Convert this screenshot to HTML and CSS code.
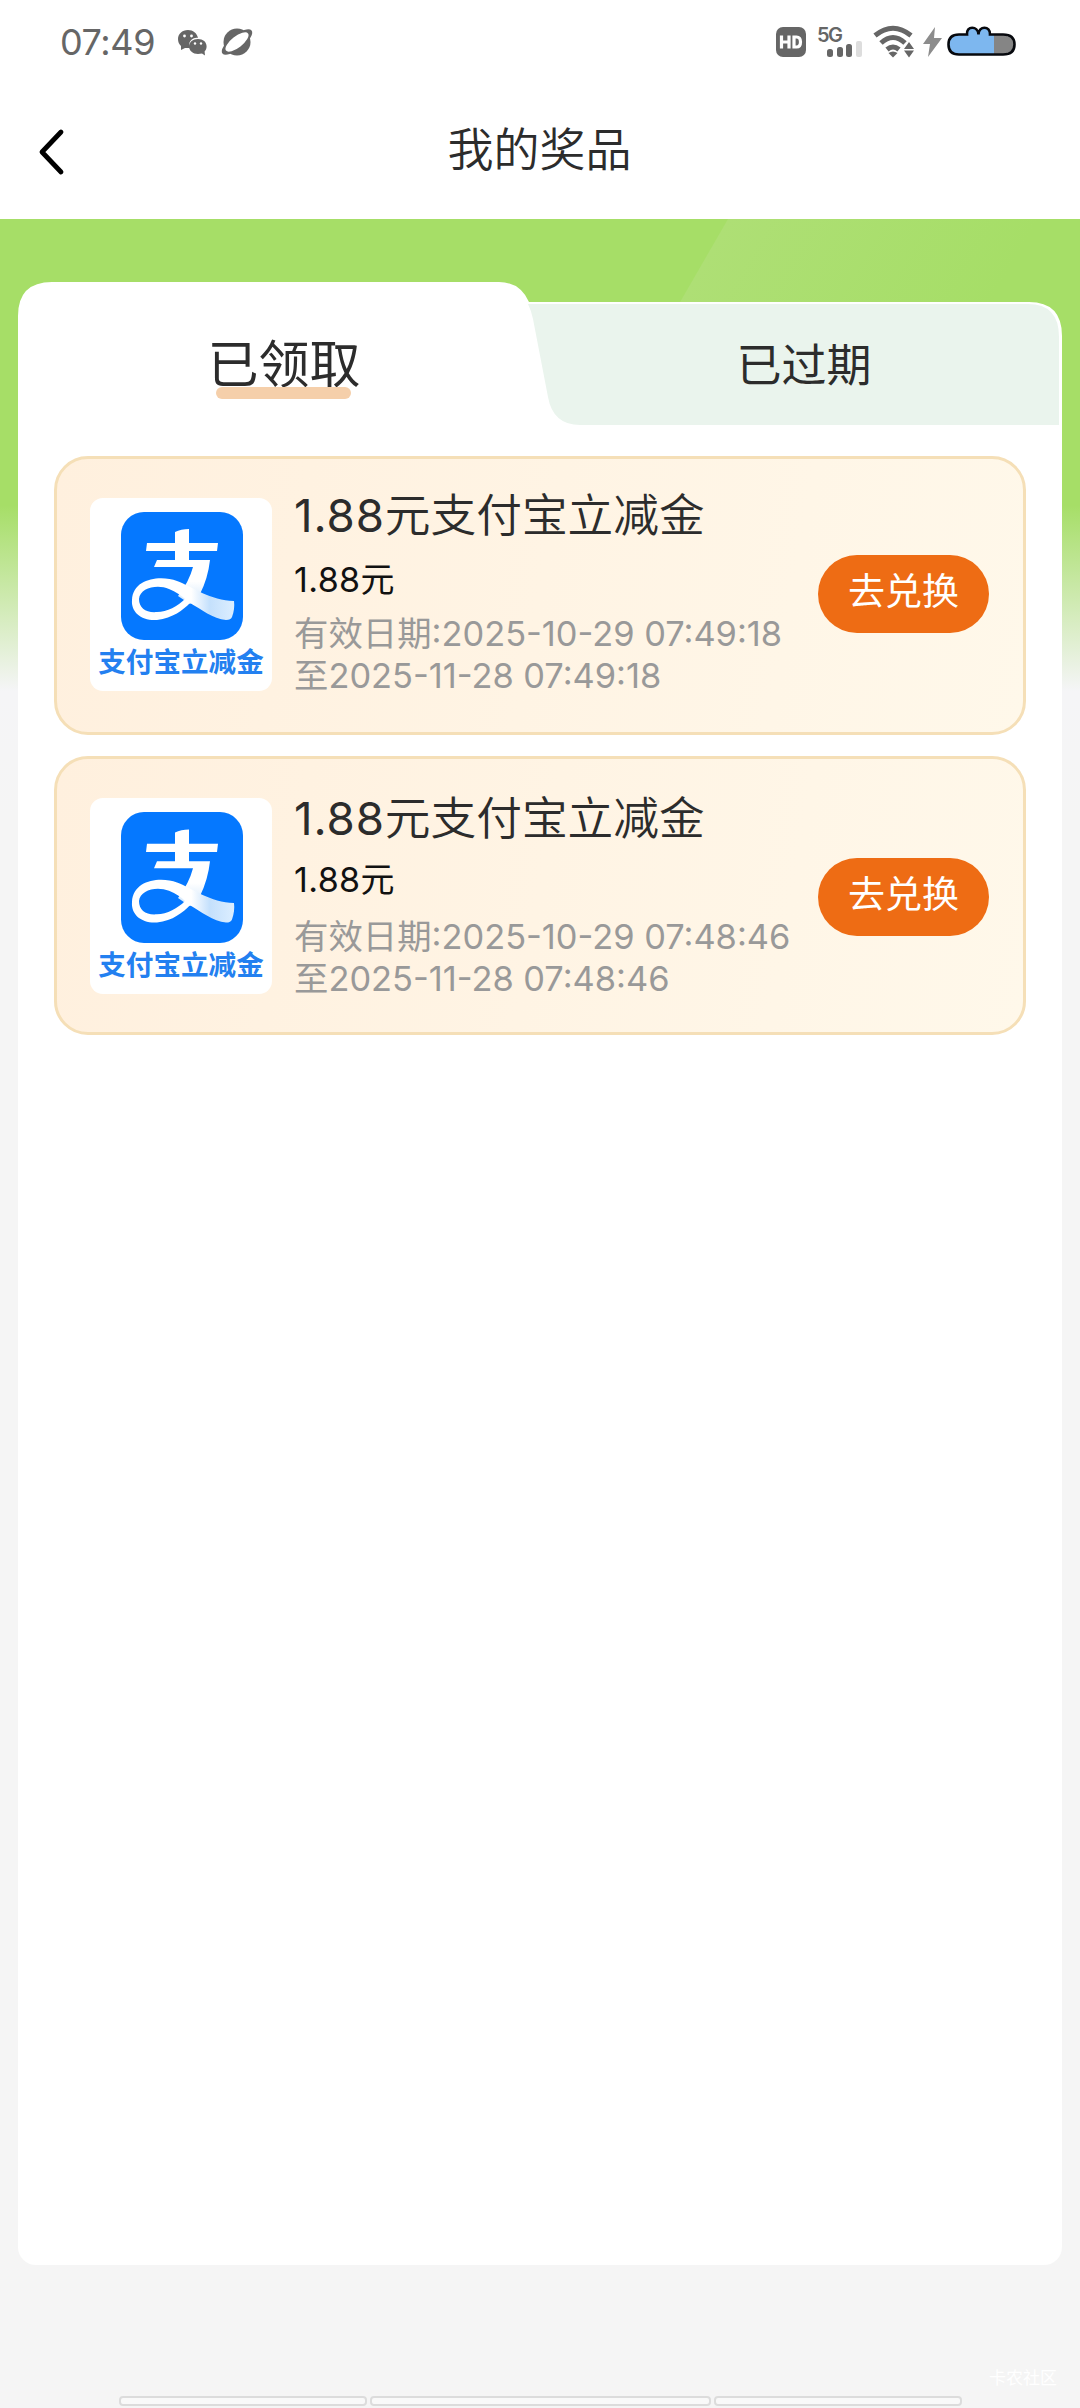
FILE: index.html
```html
<!DOCTYPE html>
<html lang="zh-CN">
<head>
<meta charset="utf-8">
<title>我的奖品</title>
<link rel="stylesheet" href="styles.css">
</head>
<body>
<svg class="defs" width="0" height="0" aria-hidden="true">
  <defs>
    <linearGradient id="loop" x1="0" y1="0" x2="1" y2="0">
      <stop offset="0" stop-color="#fff"/><stop offset=".58" stop-color="#fff"/><stop offset=".76" stop-color="#c4e0fc"/><stop offset="1" stop-color="#dceeff"/>
    </linearGradient>
    <linearGradient id="stem" x1="0" y1="0" x2="0" y2="1">
      <stop offset="0" stop-color="#fff"/><stop offset=".7" stop-color="#fff"/><stop offset="1" stop-color="#cfe5fb"/>
    </linearGradient>
    <symbol id="alipay" viewBox="0 0 122 128" preserveAspectRatio="none">
      <rect width="122" height="128" rx="23" ry="23" fill="#0578ff"/>
      <path d="M54 20Q60 17 68 17V31H97L96 39H68V48H89Q87 66 79 82L69 92 57 84Q68 70 72 55H33L36 48H54V39H25L26 31H54Z" fill="url(#stem)"/>
      <path fill-rule="evenodd" d="M113 89C90 89 70 74 56 69 40 63 12 66 11 88 10 100 20 109 36 108 52 106 62 98 69 91 80 97 92 107 105 108Q110 108 111 105 114 97 113 89ZM18 87C19 76 36 72 48 77 55 80 60 83 64 87 57 94 46 100 36 100 25 101 18 96 18 87Z" fill="url(#loop)"/>
    </symbol>
  </defs>
</svg>
<div class="phone">
  <header class="status">
    <span class="clock">07:49</span>
    <svg class="wechat" width="30" height="28" viewBox="0 0 30 28" fill="#666">
      <path d="M10 0C4 0 0 4 0 9c0 3 1 5 3 7v4l4-2h5c-3-6 3-11 8-10C19 3 15 0 10 0z"/>
      <path d="M20 9c-5 0-9 3-9 7.500 0 4 4 7.500 9 7.500l4-.6 3 2-.4-4c1-1 2-3 2-5C28.600 12 25 9 20 9z"/>
      <circle cx="6.500" cy="6" r="1.400" fill="#fff"/><circle cx="13.500" cy="6" r="1.400" fill="#fff"/>
      <circle cx="17" cy="13.500" r="1.200" fill="#fff"/><circle cx="23" cy="13.500" r="1.200" fill="#fff"/>
    </svg>
    <svg class="planet" width="32" height="28" viewBox="0 0 32 28">
      <circle cx="15" cy="14" r="13.500" fill="#666"/>
      <ellipse cx="15" cy="14" rx="18.500" ry="7" transform="rotate(-38 15 14)" fill="#666"/>
      <ellipse cx="15" cy="14" rx="14" ry="5.600" transform="rotate(-38 15 14)" fill="#fff"/>
    </svg>
    <svg class="signals" width="244" height="34" viewBox="0 0 244 34">
      <rect x="2" y="3" width="30" height="30" rx="7" fill="#666"/>
      <g fill="none" stroke="#fff" stroke-width="3.200"><path d="M7.500 11.500v13M15 11.500v13M7.500 18h7.500M20 13h2.500q4 0 4 5t-4 5H20z"/></g>
      <text x="43" y="18" class="net">5G</text>
      <rect x="53" y="25" width="6" height="8" rx="2.500" fill="#666"/><rect x="63" y="23" width="6" height="10" rx="2.500" fill="#666"/><rect x="72" y="20" width="6" height="13" rx="2.500" fill="#666"/><rect x="82" y="17" width="6" height="16" rx="2" fill="#ddd"/>
      <g fill="none" stroke="#666" stroke-width="5"><path d="M101 11.500Q119-3 137 11.500"/><path d="M107 19Q119 8 131 19"/><path d="M113 25.500q6-5 12 0"/></g>
      <path d="M114.500 29q4.500-3 9 0l-4.500 4.500zM130 25l5-7 5 7zM130 26.500l5 7 5-7z" fill="#666"/>
      <path d="M161 3l-12 17h7l-2 13 14-19h-8z" fill="#8c8c8c"/>
      <path d="M185 11h8c0-9 11-8 11-1 0-7 12-8 12 1h13q11 2 11 9.500T229 30h-44q-10-1-10-9.500t10-9.500z" fill="#858585"/>
      <path d="M185 11h8c0-9 11-8 11-1 0-7 12-8 12 1h4v19h-35q-10-1-10-9.500t10-9.500z" fill="#7db7ef"/>
      <path d="M185 10.500h8c-1-9 11-9 11.500 0 0-9 12-9 11.500 0h13q11.500 0 11.500 10T229 30.500h-44q-10.500 0-10.500-10t10.500-10z" fill="none" stroke="#07090e" stroke-width="2.600"/>
    </svg>
  </header>
  <nav class="bar">
    <svg class="back" width="28" height="46" viewBox="0 0 28 46"><path d="M23 3L4 23l19 20" fill="none" stroke="#000" stroke-width="4.800" stroke-linecap="round" stroke-linejoin="round"/></svg>
    <h1>我的奖品</h1>
  </nav>
  <main class="stage">
    <section class="panel">
      <div class="tabs">
        <svg class="tabs-bg" width="1044" height="144" viewBox="0 0 1044 144">
          <path d="M0 144V34Q0 0 34 0h447q21 0 30 20h500q33 0 33 34v90z" fill="#fff"/>
          <path d="M510 22h500q31 0 31 33v88H562q-27 0-32-28l-15-78q-2-9-5-15z" fill="#eaf4ed"/>
        </svg>
        <div class="tab active"><span>已领取</span></div>
        <div class="tab"><span>已过期</span></div>
      </div>
      <div class="list">
        <article class="card">
          <div class="thumb"><svg class="logo"><use href="#alipay"/></svg><b>支付宝立减金</b></div>
          <div class="info">
            <h2><span>1.88</span>元支付宝立减金</h2>
            <p class="price"><span>1.88</span>元</p>
            <p class="date">有效日期<span>:2025-10-29 07:49:18</span></p>
            <p class="date">至<span>2025-11-28 07:49:18</span></p>
          </div>
          <button class="go">去兑换</button>
        </article>
        <article class="card second">
          <div class="thumb"><svg class="logo"><use href="#alipay"/></svg><b>支付宝立减金</b></div>
          <div class="info">
            <h2><span>1.88</span>元支付宝立减金</h2>
            <p class="price"><span>1.88</span>元</p>
            <p class="date">有效日期<span>:2025-10-29 07:48:46</span></p>
            <p class="date">至<span>2025-11-28 07:48:46</span></p>
          </div>
          <button class="go">去兑换</button>
        </article>
      </div>
    </section>
  </main>
  <footer class="foot">
    <div class="mark">卡农社区</div>
    <div class="keys"><i></i><i></i><i></i></div>
  </footer>
</div>
</body>
</html>
```
FILE: styles.css
```css
* { box-sizing: border-box; margin: 0; padding: 0; }
body { width: 1080px; height: 2408px; overflow: hidden; background: #f5f5f5; color: #2c2c2c; font-family: "Noto Sans CJK SC", sans-serif; font-weight: 400; }
svg { display: block; flex: none; overflow: visible; }
.defs { position: absolute; }
.phone { display: flex; flex-direction: column; height: 2408px; }

.status { height: 84px; background: #fff; display: flex; align-items: flex-start; padding: 24px 62px 0 60px; }
.clock { font: 400 36px/36px Inter, sans-serif; color: #666; width: 118px; letter-spacing: -.4px; }
.wechat { margin-top: 6px; }
.planet { margin: 4px 0 0 14px; }
.signals { margin-left: auto; }
.net { font: 600 20px/24px Inter, sans-serif; fill: #666; letter-spacing: -1.500px; }

.bar { height: 135px; background: #fff; display: grid; grid-template-columns: 100px 1fr 100px; align-items: center; }
.back { margin-left: 38px; }
h1 { font-size: 46px; font-weight: 350; line-height: 60px; text-align: center; padding-bottom: 11px; margin-right: 1px; }

.stage {
  padding: 63px 18px 0;
  background:
    linear-gradient(#f5f5f500 286px, #f5f5f7 472px, #f5f5f5 600px),
    linear-gradient(120deg, #a6de6700 630px, #aedf75 631px, #a6de67 900px) 0 0 / 1080px 300px no-repeat,
    #a6de67;
  height: 2046px;
}
.panel { height: 1983px; border-radius: 0 0 18px 18px; background: linear-gradient(#fff0 143px, #fff 143px); }
.tabs { height: 144px; display: grid; grid-template-columns: 532px 510px; position: relative; }
.tabs-bg { position: absolute; left: 0; top: 0; }
.tab { position: relative; display: flex; justify-content: center; font-size: 45px; line-height: 60px; padding: 51px 2px 0 0; }
.tab.active { font-size: 51px; padding: 49px 0 0; }
.tab span { position: relative; }
.tab.active span::after { content: ""; position: absolute; left: 9px; width: 135px; top: 56px; height: 12px; border-radius: 6px; background: #f5cfaa; }

.list { display: flex; flex-direction: column; gap: 21px; padding: 30px 36px 0; }
.card { height: 279px; border: 3px solid #f5dfb7; border-radius: 34px; background: linear-gradient(100deg, #fff0de, #fff8ea); display: flex; align-items: flex-start; padding: 39px 33px 0; }
.thumb { width: 182px; height: 193px; border-radius: 13px; background: #fff; display: flex; flex-direction: column; align-items: center; padding-top: 14px; }
.logo { width: 122px; height: 128px; margin-left: 2px; }
.thumb b { font-size: 27.600px; line-height: 34px; margin-top: 3px; font-weight: 700; color: #2380f0; white-space: nowrap; }
.info { width: 524px; margin-left: 22px; white-space: nowrap; padding-top: 1px; }
.info span { font-family: Inter, sans-serif; line-height: 1; }
h2 { font-size: 45.700px; font-weight: 350; height: 50px; line-height: 50px; margin-top: -12px; }
h2 span { font-weight: 400; letter-spacing: .9px; }
.price { font-size: 34px; height: 40px; line-height: 40px; color: #111; margin-top: 21px; }
.price span { letter-spacing: .4px; }
.date { font-size: 34.400px; height: 42px; line-height: 42px; color: #999; }
.date span { letter-spacing: 0; }
.price + .date { margin-top: 12px; }
.go { width: 171px; height: 78px; margin-top: 57px; border: 0; border-radius: 39px; background: #ee6c14; color: #fff; font: 400 37px/60px "Noto Sans CJK SC", sans-serif; padding-bottom: 10px; }
.second .thumb { height: 196px; }
.second .logo { height: 131px; }
.second h2 { margin-top: -9px; }
.second .price { margin-top: 18px; }
.second .price + .date { margin-top: 15px; }
.second .go { margin-top: 60px; }

.foot { flex: 1; display: flex; flex-direction: column; align-items: center; justify-content: flex-end; }
.mark { align-self: flex-end; margin-right: 23px; font-size: 17px; line-height: 20px; color: #fff; margin-bottom: 9px; }
.keys { display: grid; grid-template-columns: 248px 341px 248px; gap: 3px; margin-bottom: 2px; }
.keys i { height: 10px; border: 2px solid #dcdcdc; border-radius: 4px; background: #f9f9f9; }
```
